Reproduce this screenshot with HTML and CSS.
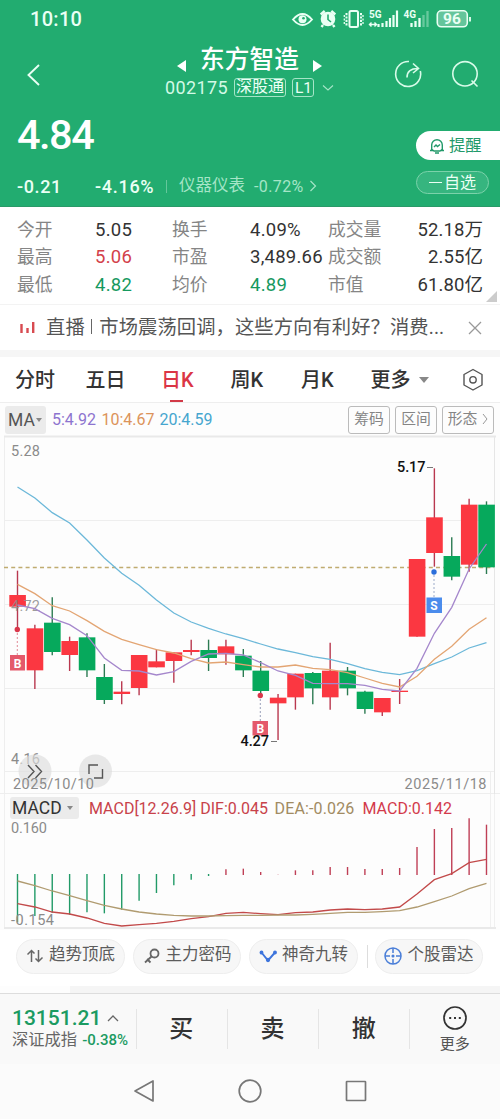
FILE: index.html
```html
<!DOCTYPE html>
<html lang="zh-CN">
<head>
<meta charset="utf-8">
<title>东方智造 002175</title>
<link rel="stylesheet" href="styles.css">
</head>
<body>
<header class="head">
  <div class="status">
    <span class="clock">10:10</span>
    <svg class="status-icons" width="182" height="24" viewBox="290 7 182 24" fill="none" stroke="#eafff4">
      <path d="M293 19.500Q302.500 8.500 312 19.500Q302.500 30.500 293 19.500Z" stroke-width="1.900"/>
      <circle cx="302.500" cy="19.300" r="4" fill="#eafff4" stroke="none"/><circle cx="303.500" cy="18.300" r="1.300" fill="#22ac70" stroke="none"/>
      <circle cx="328" cy="19" r="7.300" fill="#eafff4" stroke="none"/>
      <path d="M320.700 14.500l4-3.500M335.300 14.500l-4-3.500M323 25l-1.500 2M333 25l1.500 2" stroke-width="2.400"/>
      <path d="M328 14.500v5l3 2.500" stroke="#22ac70" stroke-width="1.600"/>
      <rect x="349.500" y="11" width="8.500" height="16" rx="1.500" stroke-width="2"/>
      <path d="M346.500 13v13M361 13v13" stroke-width="2" stroke-dasharray="2.200 1.200"/><path d="M344.300 15v9M363 15v9" stroke-width="1.300" stroke-dasharray="2 1.500"/>
      <path d="M378.500 27v-3M382.500 27v-4M386.500 27v-6M390 27v-9M393.500 27v-12M397 27V10.500" stroke-width="2.200"/>
      <path d="M370 24.500h6M371.500 22.500l-2 2 2 2M374.500 22.500l2 2-2 2" stroke-width="1.400"/>
      <path d="M411.500 27v-4M415.500 27v-6M419.500 27v-9" stroke-width="2.300"/><path d="M423.500 27V15M427.500 27V11" stroke-width="2.300" opacity=".35"/>
      <rect x="437.300" y="10.800" width="30" height="16" rx="4" stroke-width="1.600" fill="#fff" fill-opacity=".3"/><path d="M470 17v4.500" stroke-width="1.800"/>
      <g fill="#eafff4" stroke="none" class="svg-bold"><text x="369" y="17.500" font-size="10" textLength="12.500">5G</text><text x="403.500" y="17.500" font-size="10" textLength="12.500">4G</text><text x="443" y="24.300" font-size="15.500" textLength="18">96</text></g>
    </svg>
  </div>
  <nav class="nav">
    <svg class="back" width="16" height="24" viewBox="0 0 16 24"><path d="M13 2L2.500 12 13 22" fill="none" stroke="#eafff4" stroke-width="1.900"/></svg>
    <div class="title-block">
      <div class="title-row"><svg width="10" height="12"><path d="M9 0v12L0 6z" fill="#fff"/></svg><h1>东方智造</h1><svg width="10" height="12"><path d="M1 0v12l9-6z" fill="#fff"/></svg></div>
      <div class="code-row"><span class="code">002175</span><span class="badge">深股通</span><span class="badge badge-l1">L1</span><svg width="12" height="8"><path d="M1 1.500l5 4.500 5-4.500" fill="none" stroke="#a5e5c7" stroke-width="1.100"/></svg></div>
    </div>
    <div class="nav-actions">
      <svg width="28" height="28" viewBox="0 0 28 28" fill="none" stroke="#d8fbe9" stroke-width="1.600"><path d="M15 1.500A12.500 12.500 0 1 0 26.300 11M13 17.500Q13 8.500 24 8.500M19 3.500l5.500 5-5.500 4.500"/></svg>
      <svg width="28" height="28" viewBox="0 0 28 28" fill="none" stroke="#d8fbe9" stroke-width="1.600"><circle cx="14" cy="13.800" r="12.200"/><path d="M20.500 20.500l6 6"/></svg>
    </div>
  </nav>
  <div class="quote">
    <div class="quote-main">
      <div class="price">4.84</div>
      <div class="change-row"><span class="chg">-0.21</span><span class="pct">-4.16%</span><i class="bar"></i><span class="sector">仪器仪表</span><span class="sector-pct">-0.72%</span><svg width="8" height="12"><path d="M1.500 1l5 5-5 5" fill="none" stroke="#a5e5c7" stroke-width="1.200"/></svg></div>
    </div>
    <div class="quote-actions">
      <button class="remind"><svg width="16" height="16" viewBox="0 0 16 16" fill="none" stroke="#22996a" stroke-width="1.400"><path d="M2.700 12V7a5.300 5.300 0 0 1 10.600 0v5M1 12.500h3M12 12.500h3M3 11.500l2 1.500h6l2-1.500M6 15h4M5 9l2-2 1.500 1.500L11 6.500"/></svg>提醒</button>
      <button class="watch"><i></i>自选</button>
    </div>
  </div>
</header>

<section class="stats">
  <span>今开</span><b>5.05</b><span>换手</span><b>4.09%</b><span>成交量</span><b class="r">52.18万</b>
  <span>最高</span><b class="red">5.06</b><span>市盈</span><b>3,489.66</b><span>成交额</span><b class="r">2.55亿</b>
  <span>最低</span><b class="green">4.82</b><span>均价</span><b class="green">4.89</b><span>市值</span><b class="r">61.80亿</b>
  <i class="corner"></i>
</section>

<section class="news">
  <svg width="15" height="14"><path d="M1.500 3v9M7.500 7v5M13.200 1v11" stroke="#d84a50" stroke-width="2.400"/></svg>
  <span class="news-text">直播<em></em>市场震荡回调，这些方向有利好？消费...</span>
  <svg width="14" height="14"><path d="M1 1l12 12M13 1L1 13" stroke="#999" stroke-width="1.300"/></svg>
</section>

<nav class="tabs">
  <span>分时</span><span>五日</span><span class="on">日K</span><span>周K</span><span>月K</span><span class="more">更多<i></i></span>
  <svg width="22" height="24" viewBox="0 0 22 24" fill="none" stroke="#555" stroke-width="1.400"><path d="M11 1.500l9 5v10.500l-9 5-9-5V6.500z" stroke-linejoin="round"/><circle cx="11" cy="11.800" r="3.200"/></svg>
</nav>

<div class="ma">
  <span class="select">MA<i></i></span><span class="ma5">5:4.92</span><span class="ma10">10:4.67</span><span class="ma20">20:4.59</span>
  <div class="ma-tools"><span>筹码</span><span>区间</span><span>形态<svg width="6" height="12"><path d="M1 1l4 5-4 5" fill="none" stroke="#999"/></svg></span></div>
</div>

<svg class="chart" width="500" height="358" viewBox="0 436 500 358">
  <g stroke="#eee" fill="none"><path d="M5 520.500H494M5 604.500H494M5 688.500H494M5 771.500H494" /><path d="M0 793.500H500"/><path d="M4.500 437V794M490.500 771V794"/><path d="M494.500 437V794" stroke="#e6e6e6"/><path d="M4 436.500H496" stroke="#e9e9e9" stroke-width="2"/></g>
  <path d="M4 567.500H494" stroke="#c0ac70" stroke-width="1.300" stroke-dasharray="4 3.200"/>
  <g id="candles"></g>
  <g class="axis" fill="#8b8b8b"><text x="11" y="455.500" textLength="29">5.28</text><text x="11" y="610.500" textLength="29" fill-opacity=".85">4.72</text></g>
  <g id="averages" fill="none" stroke-width="1.300"></g>
  <g class="tag"><circle cx="17.300" cy="629.500" r="2.700" fill="#d9364a"/><path d="M17.300 633v22" stroke="#e08a96" stroke-dasharray="2 2"/><rect x="10" y="655" width="15" height="15.500" fill="#e4596b"/><text x="17.500" y="667.500">B</text></g>
  <g class="tag"><circle cx="260.300" cy="695.500" r="2.700" fill="#d9364a"/><path d="M260.300 699v22" stroke="#999fba" stroke-dasharray="2 2"/><rect x="252.500" y="721" width="15.500" height="14.500" fill="#e4596b"/><text x="260.300" y="732.800">B</text></g>
  <g class="tag"><circle cx="434" cy="572" r="2.700" fill="#2b6edb"/><path d="M434 575v22" stroke="#9cabc9" stroke-dasharray="2 2"/><rect x="426.500" y="597.500" width="15.500" height="15.500" fill="#4b8cec"/><text x="434" y="610.300">S</text></g>
  <g class="mark"><text x="397" y="471.500" textLength="28.500">5.17</text><text x="240.500" y="746" textLength="28.500">4.27</text><path d="M427 467.500h6M271 741.500h6" stroke="#777"/></g>
  <g class="axis" fill="#8b8b8b"><text x="11" y="764" textLength="29">4.16</text></g>
  <g fill="#ddd" fill-opacity=".65"><circle cx="35" cy="771" r="16.500"/><circle cx="95.500" cy="771" r="16.500"/></g>
  <path d="M28 765l6 6.500-6 6.500M35.500 765l6 6.500-6 6.500M89 774v-9h9M94 778h8.500v-9" fill="none" stroke="#555" stroke-width="1.400"/>
  <g class="axis" fill="#8b8b8b"><text x="13" y="788.500" textLength="81">2025/10/10</text><text x="404.500" y="788.500" textLength="82">2025/11/18</text></g>
</svg>
<div class="macd-head"><span class="select macd-select">MACD<i></i></span><span class="dif">MACD[12.26.9] DIF:0.045</span><span class="dea">DEA:-0.026</span><span class="macd-val">MACD:0.142</span></div>
<svg class="chart" width="500" height="110" viewBox="0 820 500 110">
  <path d="M4.500 794V928M490.500 794V928M494.500 794V928" stroke="#f0f0f0"/><path d="M4 928H496" stroke="#e9e9e9" stroke-width="2"/>
  <g id="histogram" stroke-width="1.400"></g>
  <g class="axis" fill="#8b8b8b"><text x="11" y="832.500" textLength="36">0.160</text><text x="11" y="924.500" textLength="43">-0.154</text></g>
  <g id="signals" fill="none" stroke-width="1.300"></g>
</svg>

<div class="chips">
  <span class="chip"><svg width="18" height="16" fill="none" stroke="#666" stroke-width="1.500"><path d="M5.500 14V2.500M1.500 6.500l4-4 3 3M12.500 2v11.500M9.500 10.500l3 3 4-4"/></svg>趋势顶底</span>
  <span class="chip"><svg width="18" height="16" fill="none" stroke="#666" stroke-width="1.800"><circle cx="11.500" cy="5.500" r="4"/><path d="M8.500 8.500L2 14.500M4 11l3.500 3.500"/></svg>主力密码</span>
  <span class="chip"><svg width="18" height="16" fill="#3d74dc" stroke="#3d74dc" stroke-width="1.900"><path d="M2.500 4.500l6.500 8L16 4.500" fill="none"/><circle cx="2.500" cy="4.500" r="1"/><circle cx="9" cy="12" r="1.200"/><circle cx="16" cy="4.500" r="1"/></svg>神奇九转</span>
  <i class="chip-sep"></i>
  <span class="chip radar"><svg width="18" height="18" fill="none" stroke="#4b7fd8" stroke-width="1.500"><circle cx="9" cy="9" r="8"/><path d="M9 1v5M9 12v5M1 9h5M12 9h5"/><circle cx="9" cy="9" r=".8" fill="#4b7fd8"/></svg>个股雷达</span>
</div>
<div class="sheet-edge"></div>

<footer class="trade">
  <div class="index"><div class="index-val">13151.21<svg width="12" height="8"><path d="M1 7l5-5 5 5" fill="none" stroke="#666" stroke-width="1.300"/></svg></div><div class="index-name">深证成指<b>-0.38%</b></div></div>
  <span class="act">买</span><span class="act">卖</span><span class="act">撤</span>
  <div class="act-more"><svg width="24" height="24" fill="none" stroke="#333" stroke-width="1.700"><circle cx="12" cy="12" r="11"/><path d="M6.200 12h2M11 12h2M15.800 12h2" stroke-width="2"/></svg>更多</div>
</footer>
<div class="sysnav">
  <svg width="22" height="24"><path d="M20 2v20L2 12z" fill="none" stroke="#777" stroke-width="1.700" stroke-linejoin="round"/></svg>
  <svg width="24" height="24"><circle cx="12" cy="12" r="10.800" fill="none" stroke="#777" stroke-width="1.700"/></svg>
  <svg width="22" height="22"><rect x="1.500" y="1.500" width="19" height="19" rx=".5" fill="none" stroke="#777" stroke-width="1.700"/></svg>
</div>
<script src="chart.js"></script>
</body>
</html>
```
FILE: styles.css
```css
* { box-sizing: border-box; }
body { margin: 0; width: 500px; background: #fdfdfd; color: #333; font-family: Roboto, "Noto Sans CJK SC", sans-serif; }
svg { display: block; flex: none; }
b, h1 { font-weight: 400; margin: 0; }
button { border: 0; font: inherit; padding: 0; }

.head { height: 207px; background: #22ac70; color: #eafff4; border-bottom: 1px solid #2a9a68; }
.status { height: 38px; display: flex; align-items: center; justify-content: space-between; padding: 0 28px 0 30px; }
.clock { font-size: 20px; font-weight: 500; letter-spacing: .3px; }
.svg-bold { font-weight: 700; }
.nav { height: 65px; display: grid; grid-template-columns: 120px 260px 120px; align-items: center; padding-top: 9px; }
.back { margin: -1px 0 0 26px; }
.title-block { display: flex; flex-direction: column; align-items: center; margin-top: -5px; }
.title-row { display: flex; align-items: center; gap: 13px; height: 30px; padding-right: 1px; }
.title-row svg { margin-top: 13px; }
.title-row h1 { font-size: 24.700px; line-height: 30px; font-weight: 500; color: #fff; }
.code-row { display: flex; align-items: center; height: 26px; gap: 6px; padding-right: 1px; }
.code { font-size: 18px; letter-spacing: .35px; color: #d3fae6; }
.badge { border: 1px solid #a5e5c7; border-radius: 3px; font-size: 16px; line-height: 16px; height: 19px; padding: 0 1px; }
.badge-l1 { padding: 0 2px; font-size: 15.500px; width: 22px; line-height: 18px; }
.code-row svg { margin-left: 2px; }
.nav-actions { display: flex; gap: 29px; padding-left: 14px; margin-top: -2px; }
.quote { display: flex; justify-content: space-between; }
.price { height: 62px; line-height: 64px; padding-left: 17px; font-size: 41.500px; font-weight: 500; letter-spacing: -1.500px; color: #fff; }
.change-row { height: 42px; display: flex; align-items: center; padding-left: 17px; font-size: 18px; font-weight: 500; }
.chg { width: 78px; letter-spacing: .6px; }
.pct { width: 71px; letter-spacing: .7px; }
.bar { width: 1px; height: 13px; background: #64c79b; margin-right: 12px; }
.sector { font-size: 16.500px; line-height: 24px; color: #a5e5c7; font-weight: 400; width: 75px; }
.sector-pct { font-size: 16px; color: #a5e5c7; font-weight: 400; width: 55px; letter-spacing: .4px; }
.quote-actions { display: flex; flex-direction: column; gap: 11px; padding-top: 28px; width: 84px; }
.remind { height: 29px; background: #fff; border-radius: 15px 0 0 15px; color: #22996a; font-size: 16.300px; line-height: 27px; display: flex; align-items: center; gap: 4px; padding-left: 13px; }
.remind svg { margin-top: 1px; }
.watch { height: 23px; width: 73px; border: 1px solid #7bd2aa; border-radius: 12px; background: #36b57f; color: #eafff4; font-size: 16px; line-height: 20px; display: flex; align-items: center; justify-content: center; gap: 2px; }
.watch i { width: 13px; height: 1.500px; background: #eafff4; }

.stats { height: 98px; display: grid; grid-template-columns: 78px 77px 78px 78px 60px 95px; grid-template-rows: repeat(3, 27.700px); padding: 8.500px 17px 0; font-size: 17.800px; line-height: 27px; position: relative; border-bottom: 1px solid #f3f3f3; background: #fff; }
.stats span { color: #858585; }
.stats b { font-size: 18.500px; line-height: 28px; letter-spacing: .25px; white-space: nowrap; }
.stats .r { text-align: right; letter-spacing: .1px; }
.stats .red { color: #d3414a; }
.stats .green { color: #16995f; }
.corner { position: absolute; right: 3px; bottom: 2px; border-left: 11px solid transparent; border-bottom: 11px solid #ccc; }
.news { height: 45px; display: flex; align-items: center; padding: 0 18px 0 20px; background: #fff; }
.news-text { font-size: 19.300px; line-height: 28px; color: #555; margin-left: 11px; width: 422px; white-space: nowrap; letter-spacing: .1px; }
.news-text em { display: inline-block; width: 1.500px; height: 15px; background: #666; margin: 0 7px 0 6px; }

.tabs { height: 53px; border-top: 7px solid #f6f6f6; border-bottom: 1px solid #eee; display: flex; align-items: center; font-size: 20px; font-weight: 500; padding: 0 16px 0 15px; background: #fff; }
.tabs span { line-height: 46px; height: 45px; width: 71px; }
.tabs .on { color: #db3545; width: 69px; margin-left: 5px; margin-right: 1px; display: flex; flex-direction: column; }
.tabs .on::after { content: ""; width: 13px; height: 2px; background: #d23a48; margin: -3px 0 0 9px; flex: none; }
.tabs .more { width: 92px; margin-right: auto; display: flex; align-items: center; gap: 8px; margin-left: -1px; white-space: nowrap; }
.more i { border: 5px solid transparent; border-top: 6px solid #888; border-bottom: 0; }
.ma { height: 33px; display: flex; align-items: center; padding: 0 6px 0 5px; font-size: 16px; white-space: nowrap; }
.select { background: #ebebeb; height: 28px; width: 41px; border-radius: 3px; display: flex; align-items: center; gap: 1px; font-size: 17.500px; padding-left: 3px; color: #555; }
.select i { border: 3.500px solid transparent; border-top: 4px solid #888; border-bottom: 0; flex: none; }
.ma5 { color: #8d74cf; margin-left: 6px; width: 49.500px; }
.ma10 { color: #dc935a; width: 58px; }
.ma20 { color: #46a6cf; }
.ma-tools { margin-left: auto; display: flex; gap: 5px; }
.ma-tools span { border: 1px solid #bbb; border-radius: 3px; height: 28px; width: 42px; font-size: 14.800px; line-height: 24px; padding-bottom: 2px; color: #858585; display: flex; align-items: center; justify-content: center; gap: 5px; }
.ma-tools span:last-child { width: 52px; }

.chart { overflow: visible; }
.axis { font-size: 14.500px; }
.mark { font-size: 14.500px; font-weight: 500; fill: #111; }
.tag text { fill: #fff; font-size: 12px; font-weight: 700; text-anchor: middle; }
.macd-head { height: 26px; display: flex; align-items: center; padding: 2px 0 0 10px; font-size: 16px; white-space: nowrap; }
.macd-select { height: 22px; width: 69px; gap: 5px; padding-left: 2px; color: #333; }
.dif { color: #c8424a; width: 185.500px; margin-left: 10px; }
.dea { color: #a18b62; width: 88px; letter-spacing: .15px; }
.macd-val { color: #d33a4b; }

.chips { height: 56px; display: flex; align-items: center; padding: 0 17px 4px 16px; gap: 8px; background: #fff; }
.chip { height: 35px; width: 108.500px; flex: none; border: 1px solid #eee; border-radius: 18px; background: #f7f7f7; display: flex; align-items: center; gap: 5px; padding: 0 0 2px 9px; font-size: 16.500px; line-height: 24px; color: #5c5c5c; white-space: nowrap; }
.chip svg { margin-top: 1px; }
.chip-sep { width: 1px; height: 23px; background: #ddd; margin: 0 0 0 1px; }
.radar { padding-left: 8px; gap: 6px; margin-left: -1px; }
.sheet-edge { height: 7px; margin-left: 70px; background: #f5f5f5; }
.trade { height: 71px; background: #f9f9f9; border-top: 1px solid #ddd; display: flex; align-items: center; padding: 0 0 1px 12px; }
.index { width: 123.500px; white-space: nowrap; }
.index-val { color: #1b9b62; font-size: 21px; font-weight: 500; line-height: 24px; display: flex; align-items: center; gap: 6px; height: 22px; }
.index-name { font-size: 16.300px; line-height: 22px; color: #666; }
.index-name b { font-size: 15px; font-weight: 500; color: #1b9b62; margin-left: 5px; }
.act { width: 91.300px; height: 40px; line-height: 40px; border-left: 1px solid #e5e5e5; text-align: center; font-size: 24px; font-weight: 500; padding-right: 1px; }
.act-more { flex: 1; height: 40px; border-left: 1px solid #e5e5e5; display: flex; flex-direction: column; align-items: center; justify-content: center; font-size: 15px; line-height: 20px; gap: 4px; padding: 3px 1px 0 0; color: #555; }
.sysnav { height: 55px; background: #fbfbfb; display: flex; align-items: center; justify-content: center; gap: 83px; padding: 0 1px 1px 0; }
```
FILE: chart.js
```js
// Pixel helpers: one column per trading day, y values in thirds of a pixel.
const STEP = 17.37;
const x = i => 17.5 + STEP * i;
const priceY = v => 470 + v / 3;
const macdY = v => 790 + v / 3;
const put = (id, markup) => { document.getElementById(id).innerHTML = markup; };

// [rising, body top, body bottom, high, low]
const candles = [
  [1,375,410,302,478],[1,475,601,464,657],[0,458,546,382,556],[1,513,555,500,603],[0,502,601,490,621],
  [0,621,690,582,702],[1,665,672,634,703],[1,555,654,555,676],[1,574,592,538,592],[1,547,573,547,638],
  [1,540,546,509,556],[0,540,564,509,603],[1,529,553,509,584],[0,557,601,537,621],[0,602,663,573,672],
  [1,683,700,672,810],[1,611,682,611,719],[0,609,655,606,703],[1,602,682,518,719],[0,602,655,591,676],
  [0,665,717,662,731],[1,684,727,684,738],[1,662,666,627,702],[1,267,500,267,500],[1,142,249,-5,290],
  [0,258,320,202,331],[1,104,284,86,305],[0,104,292,94,312]
];
put('candles', candles.map(([up, top, bottom, high, low], i) =>
  `<path d="M${x(i)} ${priceY(high)}V${priceY(low)}" stroke="${up ? '#b9384f' : '#2c7b52'}" stroke-width="1.4"/>` +
  `<rect x="${x(i) - 8.2}" y="${priceY(top)}" width="16.6" height="${(bottom - top) / 3}" fill="${up ? '#fb3741' : '#06a95c'}"/>`
).join(''));

const line = (values, y, color) =>
  `<polyline stroke="${color}" points="${values.map((v, i) => x(i) + ',' + y(v)).join(' ')}"/>`;

put('averages',
  line([51,84,128,159,210,264,310,346,390,429,456,475,492,506,522,537,548,560,568,581,596,607,614,602,581,561,534,518], priceY, '#6cb8d9') +
  line([343,371,407,423,452,484,508,524,539,549,566,579,576,584,591,591,585,595,599,608,624,640,651,619,568,529,478,443], priceY, '#e3a573') +
  line([405,416,445,464,497,564,601,603,615,605,574,552,550,555,578,603,616,640,641,641,646,658,663,595,490,412,297,222], priceY, '#a587cc'));

const bars = [397,378,368,374,367,370,359,332,309,286,269,258,238,236,246,254,241,241,231,231,237,237,234,171,117,114,85,104];
put('histogram', bars.map((v, i) =>
  `<path d="M${x(i)} ${macdY(v > 255 ? 252 : 255)}V${macdY(v)}" stroke="${v > 255 ? '#219a67' : '#bf3f56'}"/>`).join(''));

put('signals',
  line([341,351,366,372,384,400,408,404,400,394,386,380,370,367,371,374,368,366,360,357,359,357,351,312,269,251,218,208], macdY, '#c24a4a') +
  line([273,287,303,317,332,346,357,366,372,376,378,378,377,376,376,375,375,373,370,367,367,365,362,351,335,318,296,280], macdY, '#b09b70'));
```
